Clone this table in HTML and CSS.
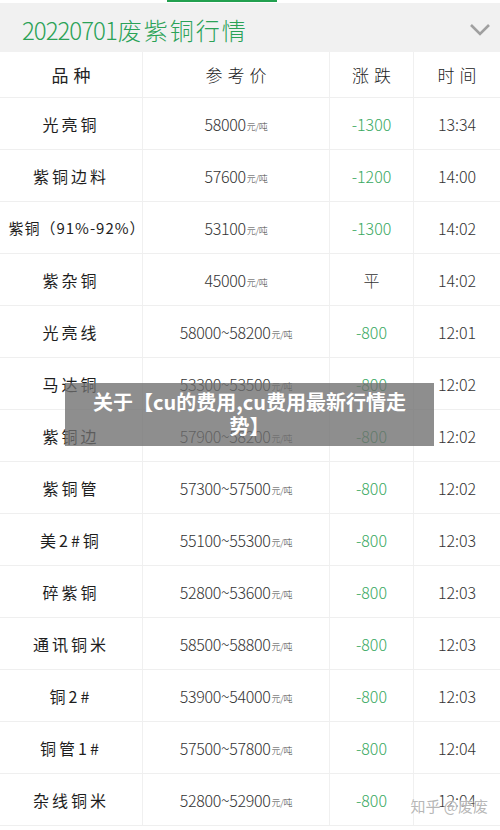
FILE: index.html
```html
<!DOCTYPE html>
<html lang="zh">
<head>
<meta charset="utf-8">
<link rel="stylesheet" href="styles.css">
</head>
<body>
<div class="page">
  <div class="topbar"><div class="indicator"></div></div>
  <div class="header">
    <div class="title">20220701<span class="cjk">废紫铜行情</span></div>
    <svg class="chevron" width="22" height="14" viewBox="0 0 22 14"><path d="M2 2 L11 11 L20 2" fill="none" stroke="#a0a0a0" stroke-width="2.6"/></svg>
  </div>
  <div class="table">
    <div class="row head"><div class="c c1">品种</div><div class="c c2">参考价</div><div class="c c3">涨跌</div><div class="c c4">时间</div></div>
    <div class="row"><div class="c c1">光亮铜</div><div class="c c2">58000<span class="u">元/吨</span></div><div class="c c3 g">-1300</div><div class="c c4">13:34</div></div>
    <div class="row"><div class="c c1">紫铜边料</div><div class="c c2">57600<span class="u">元/吨</span></div><div class="c c3 g">-1200</div><div class="c c4">14:00</div></div>
    <div class="row"><div class="c c1"><span class="nw">紫铜（91%-92%）</span></div><div class="c c2">53100<span class="u">元/吨</span></div><div class="c c3 g">-1300</div><div class="c c4">14:02</div></div>
    <div class="row"><div class="c c1">紫杂铜</div><div class="c c2">45000<span class="u">元/吨</span></div><div class="c c3">平</div><div class="c c4">14:02</div></div>
    <div class="row"><div class="c c1">光亮线</div><div class="c c2">58000~58200<span class="u">元/吨</span></div><div class="c c3 g">-800</div><div class="c c4">12:01</div></div>
    <div class="row"><div class="c c1">马达铜</div><div class="c c2">53300~53500<span class="u">元/吨</span></div><div class="c c3 g">-800</div><div class="c c4">12:02</div></div>
    <div class="row"><div class="c c1">紫铜边</div><div class="c c2">57900~58200<span class="u">元/吨</span></div><div class="c c3 g">-800</div><div class="c c4">12:02</div></div>
    <div class="row"><div class="c c1">紫铜管</div><div class="c c2">57300~57500<span class="u">元/吨</span></div><div class="c c3 g">-800</div><div class="c c4">12:02</div></div>
    <div class="row"><div class="c c1">美2#铜</div><div class="c c2">55100~55300<span class="u">元/吨</span></div><div class="c c3 g">-800</div><div class="c c4">12:03</div></div>
    <div class="row"><div class="c c1">碎紫铜</div><div class="c c2">52800~53600<span class="u">元/吨</span></div><div class="c c3 g">-800</div><div class="c c4">12:03</div></div>
    <div class="row"><div class="c c1">通讯铜米</div><div class="c c2">58500~58800<span class="u">元/吨</span></div><div class="c c3 g">-800</div><div class="c c4">12:03</div></div>
    <div class="row"><div class="c c1">铜2#</div><div class="c c2">53900~54000<span class="u">元/吨</span></div><div class="c c3 g">-800</div><div class="c c4">12:03</div></div>
    <div class="row"><div class="c c1">铜管1#</div><div class="c c2">57500~57800<span class="u">元/吨</span></div><div class="c c3 g">-800</div><div class="c c4">12:04</div></div>
    <div class="row"><div class="c c1">杂线铜米</div><div class="c c2">52800~52900<span class="u">元/吨</span></div><div class="c c3 g">-800</div><div class="c c4">12:04</div></div>
  </div>
  <div class="overlay">关于【cu的费用,cu费用最新行情走势】</div>
  <div class="watermark">知乎 @废废</div>
</div>
</body>
</html>
```
FILE: styles.css
```css
html, body {
  margin: 0;
  padding: 0;
  background: #ffffff;
}
body {
  width: 500px;
  height: 830px;
  overflow: hidden;
  font-family: "Noto Sans CJK SC", "Noto Sans", sans-serif;
}
.page {
  position: relative;
  width: 500px;
  height: 830px;
  overflow: hidden;
}
.topbar {
  height: 3px;
  background: #ffffff;
}
.indicator {
  margin-left: 167px;
  width: 110px;
  height: 2px;
  background: #22a04f;
}
.header {
  height: 49px;
  background: #f1f1f1;
  display: flex;
  align-items: center;
  justify-content: space-between;
  padding: 0 9px 0 22px;
}
.title {
  color: #2ba257;
  font-size: 24px;
  font-weight: 300;
  letter-spacing: -1px;
  line-height: 1;
  margin-top: 4px;
}
.title .cjk {
  letter-spacing: 2px;
  margin-left: 1px;
}
.chevron {
  margin-top: 4px;
}
.table {
  display: flex;
  flex-direction: column;
}
.row {
  display: grid;
  grid-template-columns: 143px 187px 84px 86px;
  height: 52px;
  border-bottom: 1px solid #efefef;
  box-sizing: border-box;
}
.row.head {
  height: 46px;
}
.c {
  display: flex;
  align-items: center;
  justify-content: center;
  color: #2a2a2a;
  font-size: 16px;
  white-space: nowrap;
  border-right: 1px solid #f0f0f0;
  box-sizing: border-box;
}
.c4 {
  border-right: none;
}
.head .c {
  font-size: 17px;
  letter-spacing: 5px;
  padding-left: 5px;
  color: #222;
}
.c1 {
  letter-spacing: 3px;
  font-size: 16px;
  color: #1e1e1e;
}
.c1 .nw {
  letter-spacing: 1px;
  font-size: 15px;
  margin-left: 12px;
}
.c2, .c3, .c4 {
  font-weight: 300;
  font-size: 16px;
  color: #333;
}
.c2 {
  letter-spacing: -0.3px;
}
.c2 .u {
  font-size: 9px;
  margin-left: 1px;
  margin-top: 5px;
  color: #444;
}
.g {
  color: #3aa962;
}
.overlay {
  position: absolute;
  left: 65px;
  top: 383px;
  width: 369px;
  height: 63px;
  box-sizing: border-box;
  padding: 7px 20px 0;
  background: rgba(110, 110, 110, 0.78);
  color: #ffffff;
  font-weight: 700;
  font-size: 20px;
  line-height: 24px;
  text-align: center;
}
.watermark {
  position: absolute;
  right: 12px;
  bottom: 14px;
  font-size: 15px;
  color: rgba(170, 170, 170, 0.85);
  text-shadow: 0 0 2px #fff, 0 0 2px #fff;
}
```
